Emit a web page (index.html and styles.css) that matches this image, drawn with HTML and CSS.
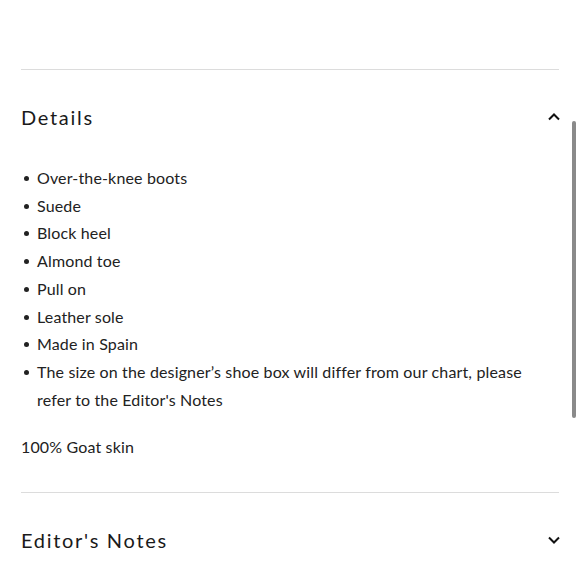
FILE: index.html
```html
<!DOCTYPE html>
<html lang="en">
<head>
<meta charset="UTF-8" />
<meta name="viewport" content="width=device-width, initial-scale=1" />
<title>Product Details</title>
<link rel="stylesheet" href="styles.css">
</head>
<body>
<div class="container">
  <div class="section">
    <div class="section-head">
      <h2>Details</h2>
      <svg class="chevron" width="12" height="8" viewBox="0 0 12 8"><path d="M1 6.5 L6 1.5 L11 6.5" fill="none" stroke="#111" stroke-width="2" /></svg>
    </div>
    <div class="section-body">
      <ul class="details-list">
        <li>Over-the-knee boots</li>
        <li>Suede</li>
        <li>Block heel</li>
        <li>Almond toe</li>
        <li>Pull on</li>
        <li>Leather sole</li>
        <li>Made in Spain</li>
        <li>The size on the designer’s shoe box will differ from our chart, please refer to the Editor's Notes</li>
      </ul>
      <p class="material">100% Goat skin</p>
    </div>
  </div>

  <div class="section">
    <div class="section-head">
      <h2>Editor's Notes</h2>
      <svg class="chevron" width="12" height="8" viewBox="0 0 12 8"><path d="M1 1.5 L6 6.5 L11 1.5" fill="none" stroke="#111" stroke-width="2" /></svg>
    </div>
  </div>
</div>
<div class="scrollbar"></div>
</body>
</html>
```

FILE: styles.css
```css
body {
  margin: 0;
  font-family: Lato, "Noto Sans", sans-serif;
  color: #222;
  background: white;
}
.container {
  padding: 69px 21px 0;
}
.section {
  border-top: 1px solid #dcdcdc;
}
.section-head {
  display: flex;
  justify-content: space-between;
  align-items: center;
  padding: 33px 0;
}
.section-head h2 {
  margin: 0;
  font-size: 20px;
  font-weight: 400;
  letter-spacing: 1.7px;
  line-height: 28px;
  color: #1a1a1a;
}
.chevron {
  margin-right: -1px;
}
.section-body {
  padding-bottom: 31px;
  font-size: 16px;
  line-height: 27.7px;
  letter-spacing: 0.15px;
}
.details-list {
  list-style: none;
  margin: 0;
  padding: 0;
}
.details-list li {
  display: flex;
}
.details-list li::before {
  content: "";
  flex: none;
  width: 5px;
  height: 5px;
  border-radius: 50%;
  background: #222;
  margin: 12px 8px 0 3px;
}
.material {
  margin: 20px 0 0;
}
.scrollbar {
  position: absolute;
  top: 121px;
  right: 4px;
  width: 4px;
  height: 297px;
  border-radius: 2px;
  background: #8a8a8a;
}
```
